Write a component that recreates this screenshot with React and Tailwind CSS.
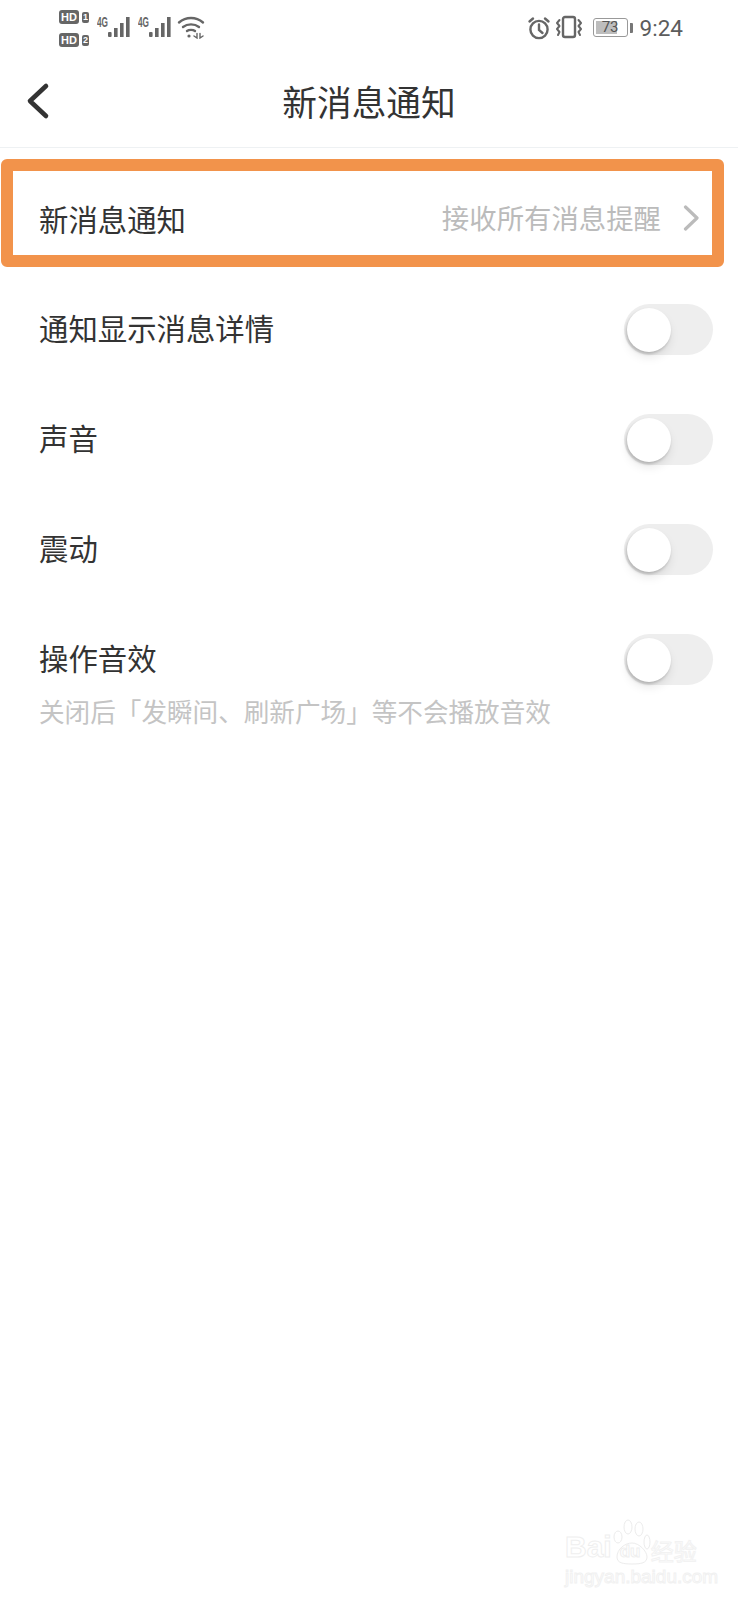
const cjk = "font-['Noto_Sans_CJK_SC','Noto_Sans',sans-serif]";

const Toggle = () => (
  <div className="relative h-[51px] w-[89px] rounded-full bg-[#eeeeee]">
    <div className="absolute left-[3px] top-[4px] h-[44px] w-[44px] rounded-full bg-white shadow-[-1px_2px_3px_rgba(0,0,0,0.2),0_6px_10px_rgba(0,0,0,0.08)]" />
  </div>
);

const Signal = () => (
  <div className="flex items-start">
    <span className="mt-[14px] w-[11px] origin-left font-['Liberation_Sans',sans-serif] text-[15px] font-bold leading-4 text-[#666] [transform:scaleX(0.55)]">
      4G
    </span>
    <svg width="23" height="22" viewBox="0 0 23 22" className="mt-[16px]" fill="#666">
      <rect x="0" y="16" width="3.6" height="5" rx="1" />
      <rect x="6" y="12" width="3.6" height="9" />
      <rect x="12" y="7" width="3.6" height="14" />
      <rect x="18" y="1" width="3.6" height="20" />
    </svg>
  </div>
);

const HdBadge = ({ n }) => (
  <div className="flex items-center gap-[3px]">
    <span className="h-[14px] w-[20px] rounded-[3px] bg-[#666] text-center font-['Liberation_Sans',sans-serif] text-[11px] font-bold leading-[14px] text-white">
      HD
    </span>
    <span className="h-[11px] w-[7px] rounded-[2px] bg-[#666] text-center font-['Liberation_Sans',sans-serif] text-[9px] font-bold leading-[11px] text-white">
      {n}
    </span>
  </div>
);

const StatusBar = () => (
  <div className="flex h-[60px] items-start justify-between pl-[59px] pr-[55px]">
    <div className="flex">
      <div className="mr-[8px] flex flex-col gap-[9px] pt-[10px]">
        <HdBadge n="1" />
        <HdBadge n="2" />
      </div>
      <Signal />
      <div className="ml-[7px]">
        <Signal />
      </div>
      <svg width="28" height="24" viewBox="0 0 28 24" className="ml-[5px] mt-[15px]" fill="none" stroke="#666" strokeWidth="2.4" strokeLinecap="round">
        <path d="M2 7.5C9 1.5 19 1.5 26 7.5" />
        <path d="M6 12C10.5 8.5 17.5 8.5 22 12" />
        <path d="M10 16C12 14.5 16 14.5 18 16" />
        <circle cx="12" cy="21" r="1.6" fill="#666" stroke="none" />
        <path d="M20 18.5V23L17 21M23 18.5V23L26 21" strokeWidth="1.4" />
      </svg>
    </div>
    <div className="flex items-start">
      <svg width="24" height="24" viewBox="0 0 24 24" className="mt-[16px] -ml-[1px]" fill="none" stroke="#666" strokeWidth="2.4" strokeLinecap="round">
        <circle cx="12" cy="13.5" r="8.6" />
        <path d="M12 8.5V14L15.5 17" />
        <path d="M2.5 5.5L6 2.5M21.5 5.5L18 2.5" />
      </svg>
      <svg width="28" height="24" viewBox="0 0 28 24" className="ml-[4px] mt-[15px]" fill="none" stroke="#666" strokeWidth="2" strokeLinecap="round" strokeLinejoin="round">
        <rect x="8" y="2" width="12" height="20" rx="2" strokeWidth="2.4" />
        <path d="M4.5 5L2 8L4.5 11L2 14L4.5 17L3 20" />
        <path d="M23.5 5L26 8L23.5 11L26 14L23.5 17L25 20" />
      </svg>
      <div className="ml-[10px] mt-[18px] flex items-center">
        <div className="relative h-[19px] w-[35px] overflow-hidden rounded-[3px] border border-[#999] p-[2px]">
          <div className="h-full w-[73%] bg-[#bdbdbd]" />
          <span className="absolute inset-0 text-center font-['Roboto',sans-serif] text-[15px] leading-[17px] text-[#555]">
            73
          </span>
        </div>
        <div className="ml-[2px] h-[10px] w-[3px] rounded-r-[1px] bg-[#777]" />
      </div>
      <span className="ml-[7px] mt-[14px] font-['Roboto',sans-serif] text-[22.5px] leading-7 text-[#5c5c5c]">
        9:24
      </span>
    </div>
  </div>
);

const Header = () => (
  <div className="relative flex h-[88px] items-center justify-center border-b border-[#eef1f3] pb-[6px]">
    <svg width="26" height="38" viewBox="0 0 26 38" className="absolute left-[25px] top-[22px]" fill="none" stroke="#333" strokeWidth="4.6" strokeLinecap="round" strokeLinejoin="round">
      <path d="M21 4L5 19L21 34" />
    </svg>
    <h1 className="text-[34.7px] font-normal leading-[48px] text-[#333]">新消息通知</h1>
  </div>
);

const Row = ({ label }) => (
  <div className="flex h-[110px] items-center justify-between pl-[39px] pr-[25px]">
    <span className="mb-[4px] text-[29.4px] text-[#333]">{label}</span>
    <Toggle />
  </div>
);

const Watermark = () => (
  <div className="absolute left-[565px] top-[1519px] w-[140px] font-['Liberation_Sans',sans-serif] text-transparent [-webkit-text-stroke:1px_#efefef]">
    <div className="flex items-end">
      <span className="mb-[4px] text-[30px] font-bold leading-7">Bai</span>
      <svg width="38" height="46" viewBox="0 0 38 46" className="ml-[1px]" fill="none" stroke="#ececec" strokeWidth="1">
        <ellipse cx="5" cy="18" rx="4" ry="6" />
        <ellipse cx="15" cy="8" rx="4" ry="7" />
        <ellipse cx="26" cy="10" rx="4" ry="7" />
        <ellipse cx="34" cy="23" rx="3" ry="7" />
        <path d="M4 38C4 30 12 24 19 24C26 24 34 32 34 38C34 44 28 45 19 45C10 45 4 44 4 38Z" />
      </svg>
      <span className="-ml-[31px] mb-[3px] w-[31px] text-[17px] font-bold leading-5">du</span>
      <span className={`${cjk} mb-[1px] whitespace-nowrap text-[23px] leading-7 [-webkit-text-stroke:1px_#f2f2f2]`}>经验</span>
    </div>
    <div className="mt-[2px] whitespace-nowrap text-[19px] leading-5 [-webkit-text-stroke:1px_#f1f1f1]">jingyan.baidu.com</div>
  </div>
);

export default function App() {
  return (
    <div className={`${cjk} relative h-[1600px] w-[738px] bg-white`}>
      <StatusBar />
      <Header />
      <div className="mx-[1px] mt-[11px] flex h-[108px] w-[723px] items-center justify-between rounded-[6px] border-[12px] border-[#f2934b] pl-[26px] pr-[13px] pt-[10px]">
        <span className="text-[29.4px] text-[#333]">新消息通知</span>
        <div className="flex items-center gap-[22px]">
          <span className="text-[27.4px] text-[#bbb]">接收所有消息提醒</span>
          <svg width="16" height="26" viewBox="0 0 16 26" fill="none" stroke="#bbb" strokeWidth="3.2" strokeLinecap="round" strokeLinejoin="round">
            <path d="M2.5 2L14 13L2.5 24" />
          </svg>
        </div>
      </div>
      <div className="mt-[7px]">
        <Row label="通知显示消息详情" />
        <Row label="声音" />
        <Row label="震动" />
        <Row label="操作音效" />
        <p className="-mt-[21px] pl-[39px] text-[25.6px] leading-9 text-[#c4c4c4]">关闭后「发瞬间、刷新广场」等不会播放音效</p>
      </div>
      <Watermark />
    </div>
  );
}
